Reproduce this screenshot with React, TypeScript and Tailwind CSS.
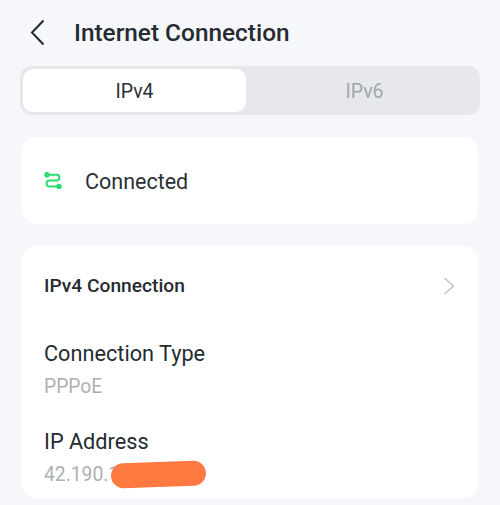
import React from 'react';

function ConnectedIcon() {
  return (
    <svg width="18" height="18" viewBox="0 0 18 18" fill="none" className="text-[#2bdc6e]">
      <path
        d="M3 2.8H12.8C14.6 2.8 15.4 4.2 15.4 5.6C15.4 7 14.6 8.6 12.8 8.6H5.2C3.4 8.6 2.6 10 2.6 11.4C2.6 12.8 3.4 14.4 5.2 14.4H14.5"
        stroke="currentColor"
        strokeWidth="2"
        strokeLinecap="round"
      />
      <circle cx="2.9" cy="2.8" r="2.7" fill="currentColor" />
      <circle cx="15" cy="14.4" r="2.7" fill="currentColor" />
    </svg>
  );
}

function InfoRow({ label, value }: { label: string; value: React.ReactNode }) {
  return (
    <div className="flex flex-col">
      <div className="text-[21.7px] leading-[28px] text-[#252b30]">{label}</div>
      <div className="mt-[7px] text-[19.3px] leading-[24px] text-[#adb0b3]">{value}</div>
    </div>
  );
}

export default function App() {
  return (
    <div className="h-[505px] w-[500px] overflow-hidden bg-[#f5f7fb] font-['Roboto',sans-serif]">
      {/* header */}
      <div className="flex h-[66px] items-start pl-[30px] pt-[19px]">
        <svg width="15" height="27" viewBox="0 0 15 27" fill="none" className="text-[#23282d]">
          <path d="M13.5 1.5L2 13.5L13.5 25.5" stroke="currentColor" strokeWidth="2" />
        </svg>
        <h1 className="ml-[29px] text-[24.4px] leading-[28px] font-medium text-[#252b30]">Internet Connection</h1>
      </div>

      {/* tabs */}
      <div className="mx-[20px] flex h-[49px] rounded-[12px] bg-[#e6e8ec] p-[3px]">
        <div className="flex w-[223px] items-center justify-center rounded-[10px] bg-white pt-[2px] text-[19.5px] text-[#2b3035]">
          IPv4
        </div>
        <div className="flex flex-1 items-center justify-center pl-[6px] pt-[2px] text-[19.5px] text-[#a3a6aa]">IPv6</div>
      </div>

      {/* status */}
      <div className="mx-[22px] mt-[22px] flex h-[87px] items-center rounded-[14px] bg-white pl-[22px]">
        <ConnectedIcon />
        <span className="ml-[23px] pt-[3px] text-[21.5px] text-[#2b3035]">Connected</span>
      </div>

      {/* details */}
      <div className="mx-[22px] mt-[22px] h-[252px] rounded-[14px] bg-white px-[22px]">
        <div className="flex items-center justify-between pt-[28px]">
          <span className="text-[19.2px] leading-[24px] font-medium text-[#252b30]">IPv4 Connection</span>
          <svg width="12" height="18" viewBox="0 0 12 18" fill="none" className="mr-[1px] text-[#c2c4c6]">
            <path d="M1.5 1L10.5 9L1.5 17" stroke="currentColor" strokeWidth="1.5" />
          </svg>
        </div>
        <div className="mt-[42px] flex flex-col gap-[29px]">
          <InfoRow label="Connection Type" value="PPPoE" />
          <InfoRow
            label="IP Address"
            value={
              <span className="relative inline-block">
                42.190.1
                <span className="absolute top-[-1px] left-[67px] h-[25px] w-[95px] -rotate-2 rounded-full bg-[#ff7a41]" />
              </span>
            }
          />
        </div>
      </div>
    </div>
  );
}
